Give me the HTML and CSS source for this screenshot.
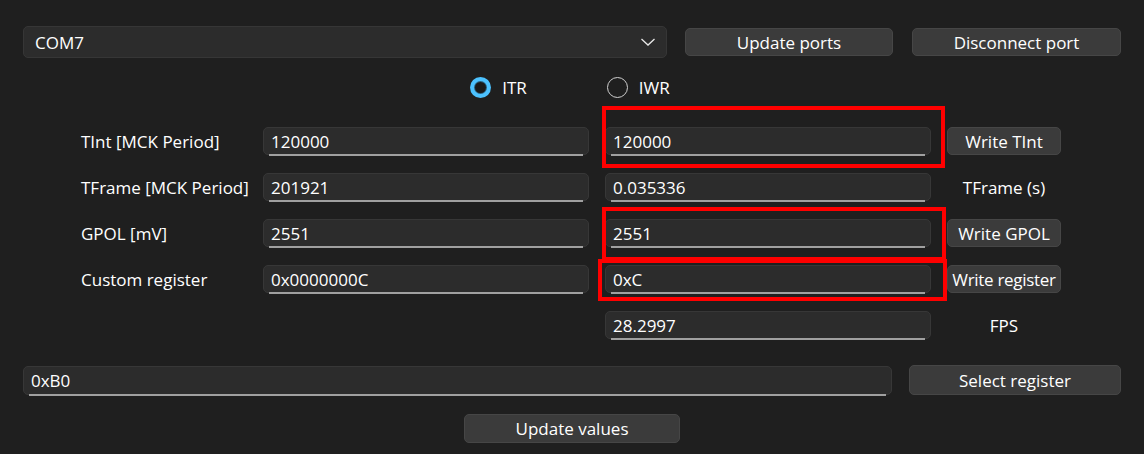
FILE: index.html
```html
<!DOCTYPE html>
<html>
<head>
<meta charset="utf-8">
<link rel="stylesheet" href="styles.css">
</head>
<body>
<div class="app">
  <div class="top">
    <div class="combo">
      <span>COM7</span>
      <svg class="chev" width="16" height="10" viewBox="0 0 16 10"><path d="M1.5 2 L8 8 L14.5 2" fill="none" stroke="#e8e8e8" stroke-width="1.3"/></svg>
    </div>
    <button class="btn btn-ports">Update ports</button>
    <button class="btn btn-disc">Disconnect port</button>
  </div>

  <div class="radios">
    <div class="radio"><span class="dot checked"></span><span>ITR</span></div>
    <div class="radio"><span class="dot"></span><span>IWR</span></div>
  </div>

  <div class="form">
    <div class="lbl">TInt [MCK Period]</div>
    <div class="field">120000</div>
    <div class="field">120000</div>
    <button class="btn">Write TInt</button>

    <div class="lbl">TFrame [MCK Period]</div>
    <div class="field">201921</div>
    <div class="field">0.035336</div>
    <div class="side">TFrame (s)</div>

    <div class="lbl">GPOL [mV]</div>
    <div class="field">2551</div>
    <div class="field">2551</div>
    <button class="btn">Write GPOL</button>

    <div class="lbl">Custom register</div>
    <div class="field">0x0000000C</div>
    <div class="field">0xC</div>
    <button class="btn btn-tight">Write register</button>

    <div class="lbl"></div>
    <div></div>
    <div class="field">28.2997</div>
    <div class="side">FPS</div>
  </div>

  <div class="reg-row">
    <div class="field field-wide">0xB0</div>
    <button class="btn btn-select">Select register</button>
  </div>

  <div class="bottom">
    <button class="btn btn-update">Update values</button>
  </div>

  <div class="mark mark1"></div>
  <div class="mark mark2"></div>
  <div class="mark mark3"></div>
</div>
</body>
</html>
```

FILE: styles.css
```css
html, body {
  margin: 0;
  padding: 0;
  background: #1f1f1f;
}
body {
  font-family: "Open Sans", "Noto Sans", "Liberation Sans", sans-serif;
  font-size: 17px;
  color: #ffffff;
}
.app {
  position: relative;
  width: 1144px;
  height: 454px;
  box-sizing: border-box;
  padding: 26px 23px 0 23px;
}
.top {
  display: flex;
  align-items: center;
  height: 32px;
}
.combo {
  width: 644px;
  height: 32px;
  box-sizing: border-box;
  border: 1px solid #363636;
  border-radius: 5px;
  background: #2c2c2c;
  display: flex;
  align-items: center;
  justify-content: space-between;
  padding: 0 10px 0 11px;
}
.chev {
  display: block;
}
.btn {
  font-family: inherit;
  font-size: 17px;
  color: #ffffff;
  background: #3b3b3b;
  border: 1px solid #464646;
  border-radius: 5px;
  height: 28px;
  padding: 0;
  box-sizing: border-box;
  display: flex;
  align-items: center;
  justify-content: center;
  white-space: nowrap;
}
.btn-ports {
  width: 208px;
  margin-left: 18px;
}
.btn-disc {
  width: 209px;
  margin-left: 19px;
}
.radios {
  display: flex;
  justify-content: center;
  gap: 80px;
  margin-top: 18px;
  height: 22px;
  padding-right: 4px;
}
.radio {
  display: flex;
  align-items: center;
  gap: 11px;
  height: 22px;
}
.dot {
  width: 21px;
  height: 21px;
  box-sizing: border-box;
  border-radius: 50%;
  border: 1.5px solid #cfcfcf;
  display: block;
}
.dot.checked {
  border: none;
  background: #4cc2ff;
  display: flex;
  align-items: center;
  justify-content: center;
}
.dot.checked::after {
  content: "";
  width: 11px;
  height: 11px;
  border-radius: 50%;
  background: #1a1a1a;
  box-shadow: 0 0 0 1px #2a5f7c;
}
.form {
  display: grid;
  grid-template-columns: 166px 326px 326px 114px;
  column-gap: 16px;
  row-gap: 18px;
  grid-auto-rows: 28px;
  margin-top: 29px;
  padding-left: 58px;
}
.lbl {
  display: flex;
  align-items: center;
  white-space: nowrap;
}
.side {
  display: flex;
  align-items: center;
  justify-content: center;
  white-space: nowrap;
}
.btn-tight {
  letter-spacing: -0.3px;
}
.field {
  position: relative;
  height: 28px;
  box-sizing: border-box;
  border: 1px solid #373737;
  border-radius: 5px;
  background: #2c2c2c;
  display: flex;
  align-items: center;
  padding: 0 7px;
  white-space: nowrap;
}
.field::after {
  content: "";
  position: absolute;
  left: 5px;
  right: 5px;
  bottom: -2px;
  height: 2px;
  background: #a0a0a0;
}
.reg-row {
  display: flex;
  align-items: center;
  margin-top: 26px;
}
.field-wide {
  width: 869px;
  height: 29px;
}
.btn-select {
  width: 212px;
  height: 30px;
  margin-left: 17px;
}
.bottom {
  display: flex;
  justify-content: center;
  margin-top: 19px;
}
.btn-update {
  width: 216px;
  height: 29px;
}
.mark {
  position: absolute;
  border: 4px solid #ff0000;
  box-sizing: border-box;
}
.mark1 {
  left: 602px;
  top: 106px;
  width: 343px;
  height: 62px;
}
.mark2 {
  left: 602px;
  top: 207px;
  width: 344px;
  height: 54px;
}
.mark3 {
  left: 598px;
  top: 259px;
  width: 349px;
  height: 42px;
}
```
